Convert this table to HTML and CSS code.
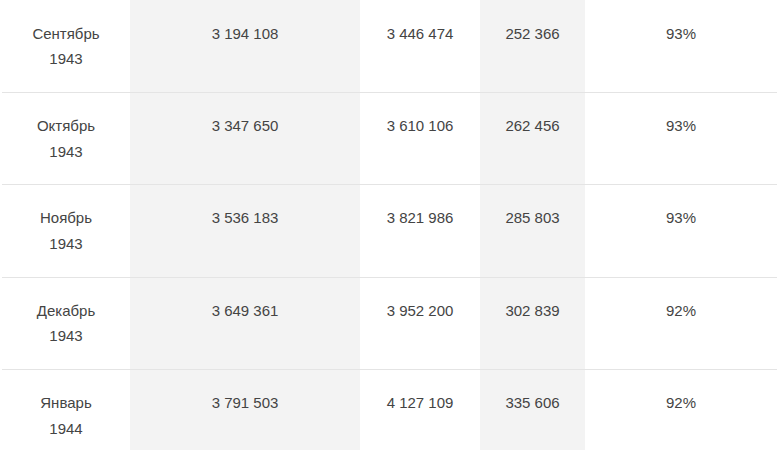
FILE: index.html
```html
<!DOCTYPE html>
<html lang="ru">
<head>
<meta charset="utf-8">
<link rel="stylesheet" href="styles.css">
</head>
<body>
<table class="stats">
  <colgroup>
    <col class="c-month">
    <col class="c-shade">
    <col class="c-plain">
    <col class="c-shade c-narrow">
    <col class="c-plain c-wide">
  </colgroup>
  <tbody>
    <tr><td>Сентябрь<br>1943</td><td>3 194 108</td><td>3 446 474</td><td>252 366</td><td>93%</td></tr>
    <tr><td>Октябрь<br>1943</td><td>3 347 650</td><td>3 610 106</td><td>262 456</td><td>93%</td></tr>
    <tr><td>Ноябрь<br>1943</td><td>3 536 183</td><td>3 821 986</td><td>285 803</td><td>93%</td></tr>
    <tr><td>Декабрь<br>1943</td><td>3 649 361</td><td>3 952 200</td><td>302 839</td><td>92%</td></tr>
    <tr><td>Январь<br>1944</td><td>3 791 503</td><td>4 127 109</td><td>335 606</td><td>92%</td></tr>
  </tbody>
</table>
</body>
</html>
```
FILE: styles.css
```css
html, body {
  margin: 0;
  padding: 0;
  background: #ffffff;
}
body {
  font-family: "Liberation Sans", Arial, sans-serif;
  font-size: 15px;
  color: #444444;
}
.stats {
  margin: 0 0 0 2px;
  width: 775px;
  border-collapse: collapse;
  table-layout: fixed;
}
.c-month { width: 128px; }
.c-shade { width: 230px; background: #f3f3f3; }
.c-plain { width: 120px; }
.c-narrow { width: 105px; }
.c-wide { width: 192px; }
.stats td {
  padding: 20px 4px;
  line-height: 25.67px;
  text-align: center;
  vertical-align: top;
  border-bottom: 1px solid #e4e4e4;
}
.stats tr:first-child td {
  padding-top: 20.6px;
}
```
